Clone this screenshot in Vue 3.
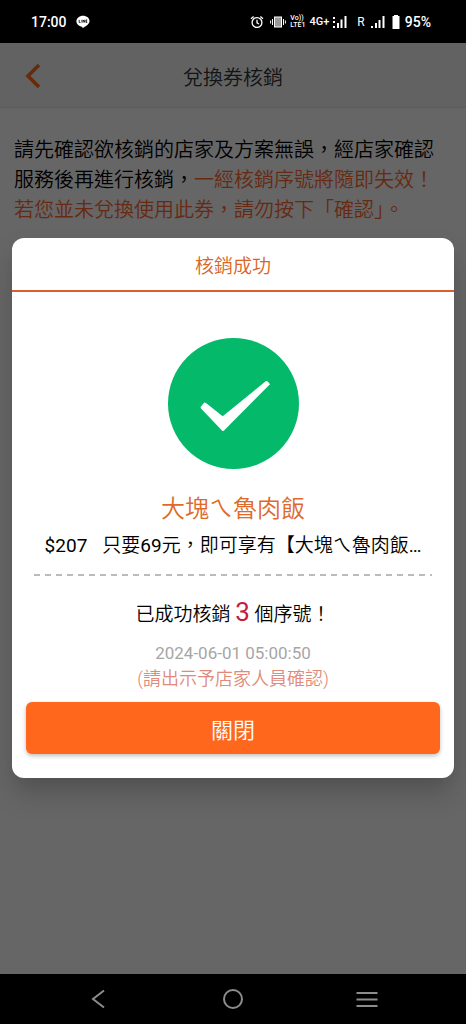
<script setup>
const storeName = '大塊ㄟ魯肉飯'
const price = 207
const planTitle = '只要69元，即可享有【大塊ㄟ魯肉飯…'
const redeemedCount = 3
const redeemedAt = '2024-06-01 05:00:50'
</script>

<template>
  <div class="screen" lang="zh-TW">
    <div class="status">
      <div class="status-left">
        <span class="clock">17:00</span>
        <svg class="line-app" viewBox="0 0 14 14" width="14" height="14" aria-label="LINE">
          <path d="M7 .8C3.300.8.4 3.300.4 6.300c0 2.800 2.500 5 5.600 5.400.5.100.5.500.500 1.500 3-1.700 7-4 7-7C13.600 3.200 10.700.8 7 .8z" fill="#fff" />
          <path d="M3.200 4.800v2.700h1.300M5.900 4.700v2.900M7.100 7.600V5l1.600 2.400V4.700M11.200 4.900H10v2.500h1.300M10 6.100h1.100" fill="none" stroke="#000" stroke-width=".8" />
        </svg>
      </div>
      <div class="status-right">
        <svg viewBox="0 0 14 14" width="14" height="14" aria-hidden="true" fill="none" stroke="#fff" stroke-width="1.300">
          <circle cx="7" cy="7.500" r="4.900" />
          <path d="M7 4.700v3.100l2 1.200M1 3.700l2.600-2.300M13 3.700l-2.600-2.300" />
        </svg>
        <svg class="vibrate" viewBox="0 0 16 14" width="16" height="14" aria-hidden="true" stroke="#fff">
          <rect x="4.500" y="2" width="7" height="10" fill="#999" />
          <path d="M2.500 4v6M13.500 4v6M.6 5.500v3M15.400 5.500v3" fill="none" />
        </svg>
        <span class="volte"><span>Vo))</span><span>LTE1</span></span>
        <span class="net">4G+</span>
        <svg class="bars" viewBox="0 0 14 14" width="14" height="14" aria-hidden="true" fill="#fff">
          <path d="M0 2h2v2H0zM0 6h2v2H0zM0 11h2v2H0zM4 8h2v5H4zM7.500 4.500h2V13h-2zM11.500 1h2v12h-2z" />
        </svg>
        <span class="roam">R</span>
        <svg class="bars2" viewBox="0 0 14 14" width="14" height="14" aria-hidden="true" fill="#fff">
          <path d="M0 11h2v2H0zM4 8h2v5H4zM7.500 5h2v8h-2zM11.500 1h2v12h-2z" />
        </svg>
        <svg class="battery" viewBox="0 0 8 14" width="8" height="14" aria-hidden="true" fill="#fff">
          <path d="M2 0h4v1h1.500v13h-7V1H2z" />
        </svg>
        <span class="percent">95%</span>
      </div>
    </div>

    <div class="stage">
      <header class="bar">
        <button class="back" type="button" aria-label="返回">
          <svg viewBox="0 0 16 26" width="16" height="26" aria-hidden="true">
            <path d="M14 2 3 13l11 11" fill="none" stroke="#ff6a20" stroke-width="3.600" />
          </svg>
        </button>
        <h1>兌換券核銷</h1>
        <span></span>
      </header>
      <p class="intro">
        請先確認欲核銷的店家及方案無誤，經店家確認服務後再進行核銷，<em>一經核銷序號將隨即失效！</em><em>若您並未兌換使用此券，請勿按下「確認」。</em>
      </p>

      <div class="overlay">
        <section class="modal" role="dialog" aria-modal="true" aria-labelledby="dialog-title">
          <h2 id="dialog-title">核銷成功</h2>
          <div class="body">
            <svg class="done" viewBox="0 0 131 131" width="131" height="131" aria-hidden="true">
              <circle cx="65.500" cy="65.500" r="65.500" fill="#04b96a" />
              <path d="M36 64.700Q37 64.300 38 65L54.700 78.300 98 43Q99.500 42.300 102 46.300L56 92.500Q55 93.500 54 92.500L33 70.500Q32.200 69.500 33 68.500z" fill="#fff" />
            </svg>
            <h3>{{ storeName }}</h3>
            <p class="plan"><span>${{ price }}</span><span>{{ planTitle }}</span></p>
            <div class="rule"></div>
            <p class="count">已成功核銷 <strong>{{ redeemedCount }}</strong> 個序號！</p>
            <time class="time">{{ redeemedAt }}</time>
            <p class="note">(請出示予店家人員確認)</p>
            <button class="close" type="button">關閉</button>
          </div>
        </section>
      </div>
    </div>

    <nav class="nav">
      <button type="button" aria-label="上一頁">
        <svg viewBox="0 0 22 22" width="22" height="22" aria-hidden="true"><path d="M16 2.500 5 11l11 8.500" /></svg>
      </button>
      <button type="button" aria-label="首頁">
        <svg viewBox="0 0 22 22" width="22" height="22" aria-hidden="true"><circle cx="11" cy="11" r="9" /></svg>
      </button>
      <button type="button" aria-label="最近使用">
        <svg viewBox="0 0 22 22" width="22" height="22" aria-hidden="true"><path d="M.5 5h21M.5 11.500h21M.5 18h21" /></svg>
      </button>
    </nav>
  </div>
</template>

<style>
body {
  margin: 0;
  background: #000;
}
</style>

<style scoped>
.screen {
  min-height: 100vh;
  display: flex;
  flex-direction: column;
  font-family: Roboto, "Noto Sans CJK TC DemiLight", "Noto Sans CJK TC", sans-serif;
  color: #000;
}
h1, h2, h3, p {
  margin: 0;
  font-weight: 400;
}
button {
  font: inherit;
  border: 0;
  padding: 0;
  background: none;
  cursor: pointer;
}
svg {
  display: block;
  flex: none;
}
.status {
  height: 43px;
  padding: 0 35px 0 31px;
  background: #000;
  color: #fff;
  display: flex;
  align-items: center;
  justify-content: space-between;
}
.status-left, .status-right {
  display: flex;
  align-items: center;
}
.clock {
  font-size: 14px;
  font-weight: 500;
  margin-right: 9px;
}
.vibrate {
  margin-left: 6px;
}
.volte {
  display: flex;
  flex-direction: column;
  font-size: 7px;
  line-height: 7px;
  font-weight: 500;
  margin-left: 4px;
}
.net {
  font-size: 11px;
  font-weight: 500;
  margin-left: 4px;
}
.bars {
  margin-left: 4px;
}
.roam {
  font-size: 12px;
  margin-left: 10px;
}
.bars2 {
  margin-left: 6px;
}
.battery {
  margin-left: 7px;
}
.percent {
  font-size: 14px;
  font-weight: 500;
  margin-left: 5px;
}
.stage {
  flex: 1;
  position: relative;
  background: #fff;
}
.bar {
  display: grid;
  grid-template-columns: 66px 1fr 66px;
  align-items: center;
  height: 64px;
  background: #f5f5f5;
  border-bottom: 1px solid #e4e4e4;
}
.bar h1 {
  padding-top: 6px;
  text-align: center;
  font-size: 20px;
  font-weight: 300;
  line-height: 30px;
  color: #333;
}
.back {
  height: 64px;
  padding-top: 2px;
  display: grid;
  place-items: center;
}
.intro {
  padding: 27px 14px 0;
  font-size: 20px;
  line-height: 30px;
}
.intro em {
  font-style: normal;
  color: #ff6a30;
}
.overlay {
  position: absolute;
  inset: 0;
  display: flex;
  align-items: center;
  padding: 0 12px 1px;
  background: rgba(0, 0, 0, 0.6);
}
.modal {
  flex: 1;
  min-width: 0;
  background: #fff;
  border-radius: 12px;
  box-shadow: 0 11px 15px -7px rgba(0, 0, 0, 0.08), 0 16px 28px 0 rgba(0, 0, 0, 0.16);
}
.modal h2 {
  padding: 14px 0 8px;
  border-bottom: 2px solid #d95f30;
  text-align: center;
  font-size: 19px;
  font-weight: 300;
  line-height: 30px;
  color: #d96426;
}
.body {
  padding: 46px 14px 24px;
  display: flex;
  flex-direction: column;
  align-items: center;
}
h3 {
  margin-top: 22px;
  font-size: 24px;
  line-height: 36px;
  color: #e0692a;
}
.plan {
  margin-top: 5px;
  display: flex;
  gap: 15px;
  font-size: 19px;
  line-height: 28px;
  white-space: nowrap;
}
.rule {
  align-self: stretch;
  height: 2px;
  margin: 14px 8px 0;
  background: repeating-linear-gradient(90deg, #bbb 0 6px, transparent 6px 11px);
}
.count {
  margin-top: 18px;
  font-size: 19px;
  line-height: 36px;
}
.count strong {
  font-size: 26px;
  font-weight: 400;
  color: #c4203c;
}
.time {
  margin-top: 7px;
  font-size: 17px;
  line-height: 26px;
  color: #a6a6a6;
}
.note {
  font-size: 18px;
  font-weight: 300;
  line-height: 26px;
  color: #e08a7c;
}
.close {
  align-self: stretch;
  margin-top: 10px;
  height: 52px;
  border-radius: 6px;
  background: #ff671d;
  color: #fff;
  font-size: 22px;
  box-shadow: 0 2px 4px rgba(0, 0, 0, 0.25);
}
.nav {
  height: 50px;
  padding: 0 32px;
  background: #000;
  display: flex;
  justify-content: space-between;
}
.nav button {
  flex: 1;
  display: grid;
  place-items: center;
}
.nav svg {
  fill: none;
  stroke: #8c8c8c;
  stroke-width: 2;
}
</style>
